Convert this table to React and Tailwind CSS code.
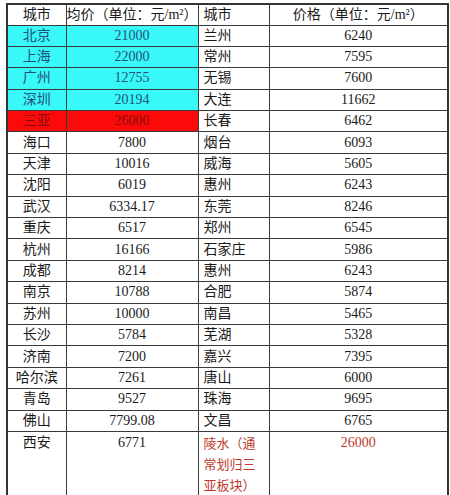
import React from 'react';

const ROWS = [
  { a: '北京', b: '21000', c: '兰州', d: '6240', bg: 'cyan' },
  { a: '上海', b: '22000', c: '常州', d: '7595', bg: 'cyan' },
  { a: '广州', b: '12755', c: '无锡', d: '7600', bg: 'cyan' },
  { a: '深圳', b: '20194', c: '大连', d: '11662', bg: 'cyan' },
  { a: '三亚', b: '26000', c: '长春', d: '6462', bg: 'red' },
  { a: '海口', b: '7800', c: '烟台', d: '6093' },
  { a: '天津', b: '10016', c: '威海', d: '5605' },
  { a: '沈阳', b: '6019', c: '惠州', d: '6243' },
  { a: '武汉', b: '6334.17', c: '东莞', d: '8246' },
  { a: '重庆', b: '6517', c: '郑州', d: '6545' },
  { a: '杭州', b: '16166', c: '石家庄', d: '5986' },
  { a: '成都', b: '8214', c: '惠州', d: '6243' },
  { a: '南京', b: '10788', c: '合肥', d: '5874' },
  { a: '苏州', b: '10000', c: '南昌', d: '5465' },
  { a: '长沙', b: '5784', c: '芜湖', d: '5328' },
  { a: '济南', b: '7200', c: '嘉兴', d: '7395' },
  { a: '哈尔滨', b: '7261', c: '唐山', d: '6000' },
  { a: '青岛', b: '9527', c: '珠海', d: '9695' },
  { a: '佛山', b: '7799.08', c: '文昌', d: '6765' },
];

const cell = 'border border-[#3a3a3a] p-0';

export default function App() {
  return (
    <div className="w-[450px] h-[495px] bg-white pt-[3px] pl-[6px]" style={{ fontFamily: '"Liberation Serif", "Noto Sans CJK SC", serif' }}>
      <table className="border-collapse border-2 border-[#333] text-[#1a1a1a] table-fixed w-[441px] leading-none">
        <colgroup>
          <col className="w-[59px]" />
          <col className="w-[132px]" />
          <col className="w-[71px]" />
          <col className="w-[179px]" />
        </colgroup>
        <thead>
          <tr className="h-[21px]">
            <th className={`${cell} font-normal text-[14px] text-center`}>城市</th>
            <th className={`${cell} font-normal text-[14px] text-center`}>均价（单位：元/m²）</th>
            <th className={`${cell} font-normal text-[14px] text-left pl-[5px]`}>城市</th>
            <th className={`${cell} font-normal text-[14px] text-center`}>价格（单位：元/m²）</th>
          </tr>
        </thead>
        <tbody>
          {ROWS.map((r, i) => {
            const bg = r.bg === 'cyan' ? 'bg-[#38f8f8]' : r.bg === 'red' ? 'bg-[#fb0a0a]' : '';
            const tc = r.bg === 'cyan' ? 'text-[#24507a]' : r.bg === 'red' ? 'text-[#8a0c0c]' : '';
            return (
              <tr key={i} className="h-[21.4px]">
                <td className={`${cell} ${bg} ${tc} text-[14px] text-center`}>{r.a}</td>
                <td className={`${cell} ${bg} ${tc} text-[14px] text-center`}>{r.b}</td>
                <td className={`${cell} text-[14px] text-left pl-[5px]`}>{r.c}</td>
                <td className={`${cell} text-[14px] text-center`}>{r.d}</td>
              </tr>
            );
          })}
          <tr className="h-[62px]">
            <td className={`${cell} text-[14px] text-center align-top pt-[4px]`}>西安</td>
            <td className={`${cell} text-[14px] text-center align-top pt-[4px]`}>6771</td>
            <td className={`${cell} text-[13px] text-left pl-[5px] align-top pt-[1px] text-[#c0392b]`}>
              <div className="leading-[21px]">
                陵水（通<br />常划归三<br />亚板块）
              </div>
            </td>
            <td className={`${cell} text-[14px] text-center align-top pt-[4px] text-[#c0392b]`}>26000</td>
          </tr>
        </tbody>
      </table>
    </div>
  );
}
